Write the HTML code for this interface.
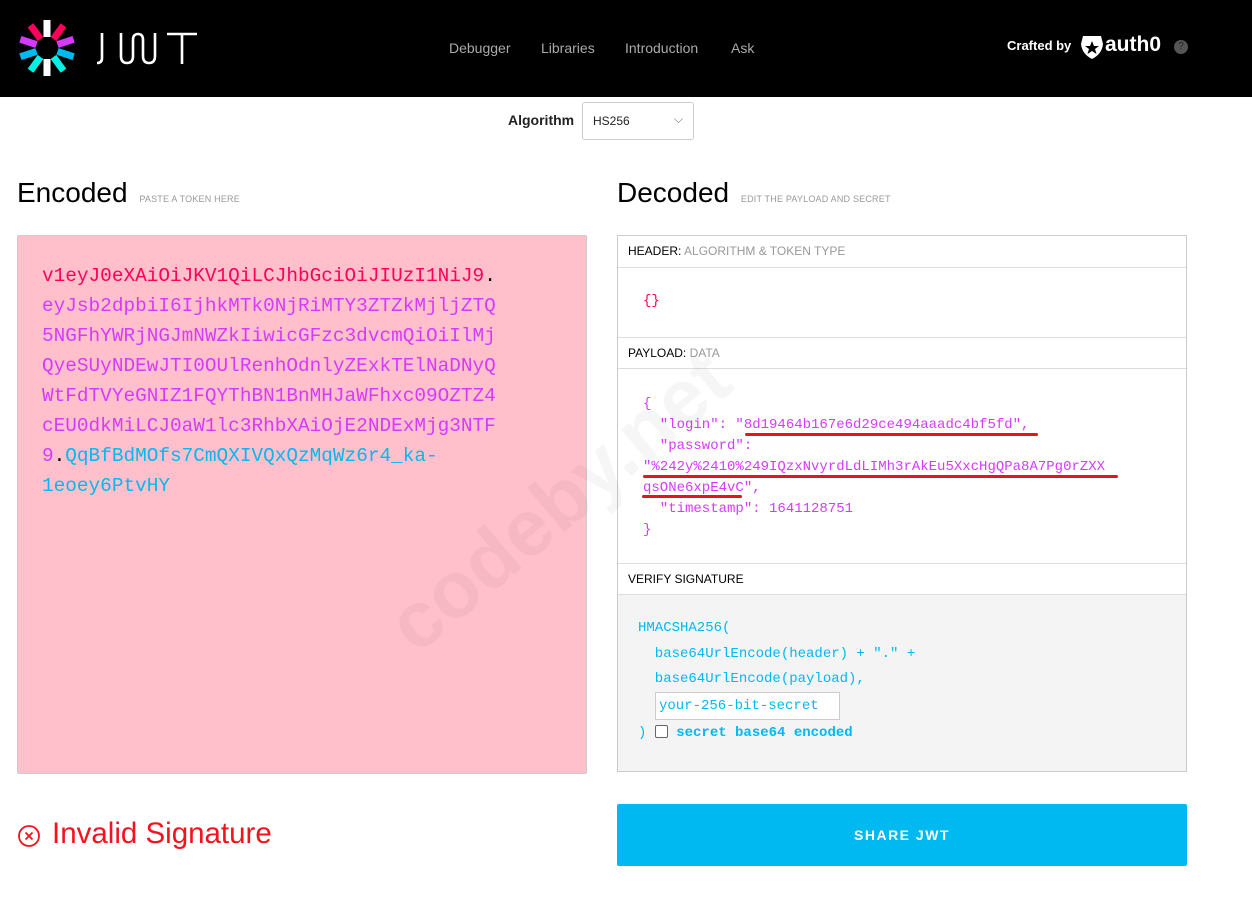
<!DOCTYPE html>
<html><head><meta charset="utf-8"><style>
*{box-sizing:border-box;margin:0;padding:0}
body{width:1252px;height:903px;background:#fff;font-family:"Liberation Sans",sans-serif;position:relative;overflow:hidden}
.nav{position:absolute;left:0;top:0;width:1252px;height:97px;background:#000}
.abs{position:absolute}
.mono{font-family:"Liberation Mono",monospace}
.navl{color:#aaa;font-size:14px;top:40px}
.box{position:absolute;border:1px solid #ddd}
.sec{position:absolute;left:0;width:568px;font-size:12px;color:#000;padding-left:10px;border-bottom:1px solid #ddd;border-top:1px solid #ddd;background:#fff}
.sec span{color:#999}
.enc{font-size:19.4px;line-height:30px;white-space:pre}
.pl{font-size:14px;line-height:21px;color:#d63aff;white-space:pre}
.sig{font-size:14px;line-height:25.5px;color:#00b9f1;white-space:pre}
.red{position:absolute;height:3px;background:#e8141c;border-radius:2px}
</style></head><body>
<div class="nav">
<svg class="abs" style="left:16px;top:18px" width="62" height="60" viewBox="0 0 62 60">
<g transform="translate(31,30)" stroke-width="7">
<line x1="0" y1="-28" x2="0" y2="-11" stroke="#fff"/>
<line x1="0" y1="28" x2="0" y2="11" stroke="#fff"/>
<g transform="rotate(36)"><line x1="0" y1="-28" x2="0" y2="-11" stroke="#fb015b"/><line x1="0" y1="28" x2="0" y2="11" stroke="#00f2e6"/></g>
<g transform="rotate(72)"><line x1="0" y1="-28" x2="0" y2="-11" stroke="#d63aff"/><line x1="0" y1="28" x2="0" y2="11" stroke="#00b9f1"/></g>
<g transform="rotate(108)"><line x1="0" y1="-28" x2="0" y2="-11" stroke="#00b9f1"/><line x1="0" y1="28" x2="0" y2="11" stroke="#d63aff"/></g>
<g transform="rotate(144)"><line x1="0" y1="-28" x2="0" y2="-11" stroke="#00f2e6"/><line x1="0" y1="28" x2="0" y2="11" stroke="#fb015b"/></g>
</g></svg>
<svg class="abs" style="left:96px;top:32px" width="102" height="33" viewBox="0 0 102 33" fill="none" stroke="#fff" stroke-width="2.6">
<path d="M6 1V26Q6 31 1 31"/>
<path d="M25 1V24Q25 31 31 31Q37 31 37 24V8Q37 2 42 2Q47 2 47 8V24Q47 31 53 31Q59 31 59 24V1"/>
<path d="M71 2H101M86 2V32"/>
</svg>
<div class="abs navl" style="left:449px">Debugger</div>
<div class="abs navl" style="left:541px">Libraries</div>
<div class="abs navl" style="left:625px">Introduction</div>
<div class="abs navl" style="left:731px">Ask</div>
<div class="abs" style="left:1007px;top:38px;color:#fff;font-size:13px;font-weight:bold">Crafted by</div>
<svg class="abs" style="left:1080px;top:34px" width="24" height="26" viewBox="0 0 24 26"><path d="M3 2H21L23 10Q22 20 12 25Q2 20 1 10Z" fill="#fff"/><path d="M12 7L14 12H19L15 15L16.5 20L12 17L7.5 20L9 15L5 12H10Z" fill="#000"/></svg>
<div class="abs" style="left:1105px;top:33px;color:#fff;font-size:21px;font-weight:bold">auth0</div>
<div class="abs" style="left:1174px;top:40px;width:14px;height:14px;border-radius:7px;background:#555;color:#222;font-size:10px;text-align:center;line-height:14px">?</div>
</div>

<div class="abs" style="left:508px;top:112px;font-size:14px;font-weight:bold;color:#222">Algorithm</div>
<div class="abs" style="left:582px;top:102px;width:112px;height:38px;border:1px solid #ccc;border-radius:3px;font-size:12px;padding:11px 10px;color:#222">HS256<span style="position:absolute;right:10px;top:9px;color:#777">⌵</span></div>

<div class="abs" style="left:17px;top:177px;font-size:28px;color:#000">Encoded <span style="font-size:9px;color:#999;margin-left:4px;letter-spacing:.2px">PASTE A TOKEN HERE</span></div>
<div class="abs" style="left:617px;top:177px;font-size:28px;color:#000">Decoded <span style="font-size:9px;color:#999;margin-left:4px;letter-spacing:.2px">EDIT THE PAYLOAD AND SECRET</span></div>

<div class="box" style="left:17px;top:235px;width:570px;height:539px;background:#ffc0cb;border-color:#ccc;border-radius:2px"></div>
<div class="abs mono enc" style="left:42px;top:261px"><span style="color:#fb015b">v1eyJ0eXAiOiJKV1QiLCJhbGciOiJIUzI1NiJ9</span><span style="color:#000">.</span>
<span style="color:#d63aff">eyJsb2dpbiI6IjhkMTk0NjRiMTY3ZTZkMjljZTQ
5NGFhYWRjNGJmNWZkIiwicGFzc3dvcmQiOiIlMj
QyeSUyNDEwJTI0OUlRenhOdnlyZExkTElNaDNyQ
WtFdTVYeGNIZ1FQYThBN1BnMHJaWFhxc09OZTZ4
cEU0dkMiLCJ0aW1lc3RhbXAiOjE2NDExMjg3NTF
9</span><span style="color:#000">.</span><span style="color:#00b9f1">QqBfBdMOfs7CmQXIVQxQzMqWz6r4_ka-
1eoey6PtvHY</span></div>

<div class="box" style="left:617px;top:235px;width:570px;height:537px;border-color:#ccc">
<div class="sec" style="top:0;height:32px;line-height:30px;border-top:none">HEADER: <span>ALGORITHM &amp; TOKEN TYPE</span></div>
<div class="abs mono" style="left:25px;top:57px;font-size:14px;color:#fb015b">{}</div>
<div class="sec" style="top:101px;height:32px;line-height:30px">PAYLOAD: <span>DATA</span></div>
<div class="abs mono pl" style="left:25px;top:158px">{
  "login": "8d19464b167e6d29ce494aaadc4bf5fd",
  "password":
"%242y%2410%249IQzxNvyrdLdLIMh3rAkEu5XxcHgQPa8A7Pg0rZXX
qsONe6xpE4vC",
  "timestamp": 1641128751
}</div>
<div class="sec" style="top:327px;height:32px;line-height:30px">VERIFY SIGNATURE</div>
<div class="abs" style="left:0;top:359px;width:568px;height:176px;background:#f4f4f4"></div>
<div class="abs mono sig" style="left:20px;top:380px">HMACSHA256(
  base64UrlEncode(header) + "." +
  base64UrlEncode(payload),
</div>
<div class="abs mono sig" style="left:20px;top:485px">) <span style="display:inline-block;width:13px;height:13px;border:1px solid #666;border-radius:2px;background:#fff;vertical-align:-2px"></span> <b>secret base64 encoded</b></div>
<div class="abs mono" style="left:37px;top:456px;width:185px;height:28px;background:#fff;border:1px solid #ccc;font-size:14px;color:#00b9f1;padding:5px 3px">your-256-bit-secret</div>
</div>
<div class="red" style="left:745px;top:433px;width:293px"></div>
<div class="red" style="left:643px;top:475px;width:475px"></div>
<div class="red" style="left:642px;top:495px;width:100px"></div>

<div class="abs" style="left:370px;top:600px;font-size:80px;font-weight:bold;color:rgba(0,0,0,.035);transform:rotate(-40deg);transform-origin:left top">codeby.net</div>

<svg class="abs" style="left:17px;top:824px" width="24" height="24" viewBox="0 0 24 24" fill="none" stroke="#f4131d" stroke-width="1.8"><circle cx="12" cy="12" r="10"/><path d="M8.5 8.5L15.5 15.5M15.5 8.5L8.5 15.5"/></svg>
<div class="abs" style="left:52px;top:817px;font-size:29.5px;color:#f4131d">Invalid Signature</div>
<div class="abs" style="left:617px;top:804px;width:570px;height:62px;background:#00b9f1;border-radius:2px;color:#fff;font-size:14px;font-weight:bold;letter-spacing:1.5px;text-align:center;line-height:62px">SHARE JWT</div>
</body></html>
